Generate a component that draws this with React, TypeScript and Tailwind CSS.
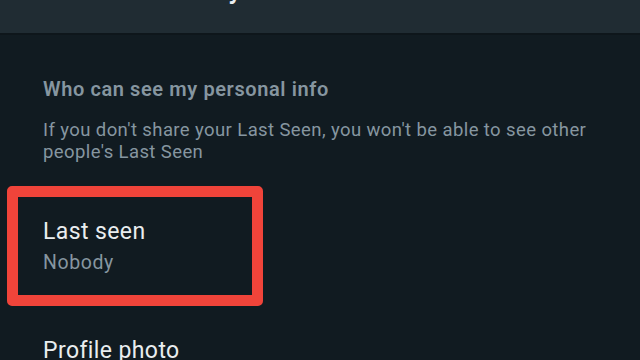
export default function App() {
  return (
    <div className="w-[640px] h-[360px] overflow-hidden bg-[#111b21] font-['Roboto',sans-serif]">
      <header className="h-[35px] overflow-hidden bg-[#202c33] border-b-2 border-[#0e161b]">
        <h1 className="ml-[150px] -mt-[24px] text-[27px] leading-[26px] font-medium tracking-[0.5px] text-[#e9edef]">
          Privacy
        </h1>
      </header>

      <section className="px-[43px] pt-[42px]">
        <h2 className="text-[20px] leading-[24px] font-semibold tracking-[0.6px] text-[#8696a0]">
          Who can see my personal info
        </h2>
        <p className="mt-[18px] text-[18.5px] leading-[22px] tracking-[0.4px] text-[#8696a0]">
          If you don't share your Last Seen, you won't be able to see other people's Last Seen
        </p>
      </section>

      <div className="ml-[7px] mt-[23px] w-[256px] h-[120px] border-[11px] border-[#f0443a] rounded-[5px] pl-[25px] pt-[21px]">
        <div className="text-[23px] leading-[28px] tracking-[0.4px] text-[#e9edef]">Last seen</div>
        <div className="mt-[5px] text-[19.5px] leading-[24px] tracking-[0.6px] text-[#8696a0]">Nobody</div>
      </div>

      <div className="px-[43px] pt-[31px]">
        <div className="text-[23px] leading-[28px] tracking-[0.4px] text-[#e9edef]">Profile photo</div>
      </div>
    </div>
  )
}
